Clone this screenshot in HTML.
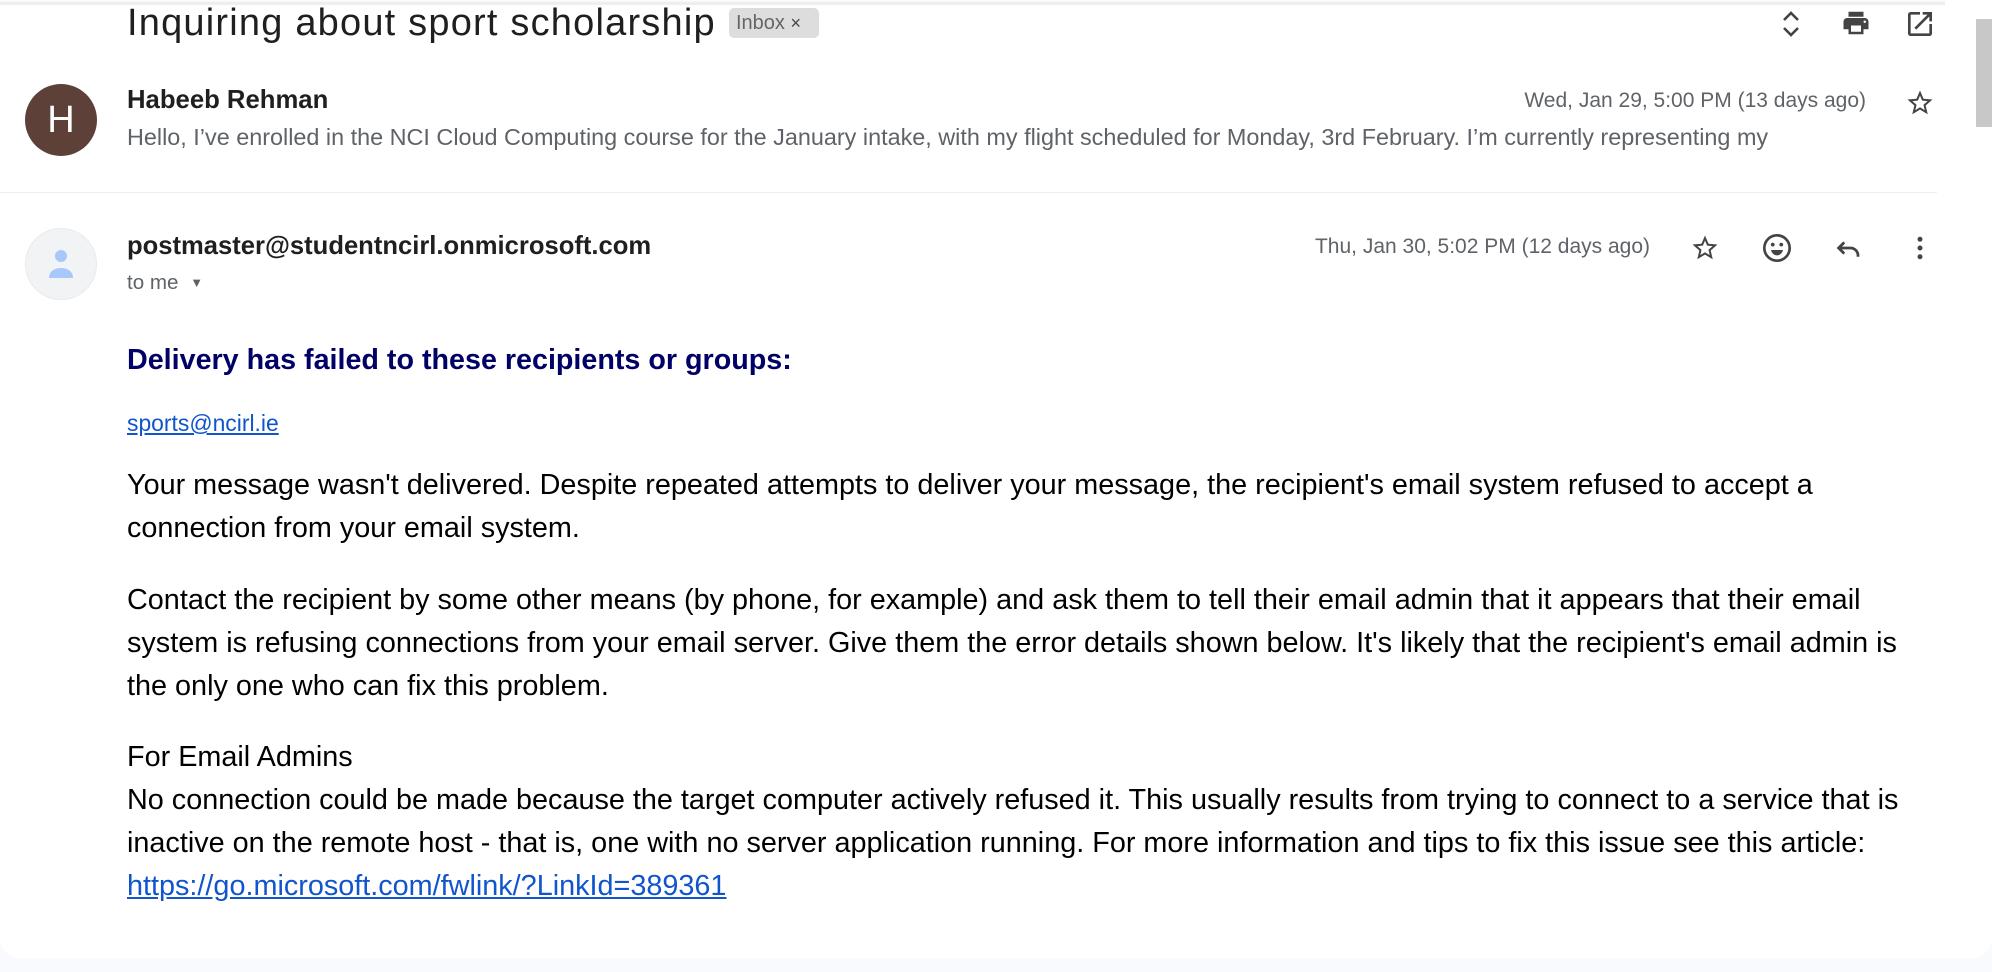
<!DOCTYPE html>
<html><head><meta charset="utf-8"><style>
*{margin:0;padding:0;box-sizing:border-box}
body{width:1992px;height:972px;background:#f8fafd;font-family:"Liberation Sans",Arial,sans-serif;position:relative;overflow:hidden}
.card{position:absolute;left:0;top:0;width:1992px;height:958px;background:#fff;border-radius:0 0 20px 20px}
.a{position:absolute;white-space:nowrap}
.shadow{position:absolute;left:0;top:0;width:1945px;height:6px;background:linear-gradient(#fff,#e8eaed 60%,#fff)}
.body{color:#000;font-size:28.8px;line-height:43px;left:127px}
svg{position:absolute}
</style></head><body>
<div class="card"></div>
<div class="shadow"></div>
<div class="a" style="left:127px;top:2px;font-size:38px;color:#1f1f1f;letter-spacing:1.2px">Inquiring about sport scholarship</div>
<div class="a" style="left:729px;top:8px;width:90px;height:30px;background:#ddd;border-radius:5px;font-size:20px;color:#666;line-height:30px;padding-left:7px">Inbox <span style="font-size:18px;color:#444">×</span></div>
<svg style="left:1776px;top:8px" width="30" height="32" viewBox="0 0 30 32"><path d="M8 12l7-7 7 7M8 20l7 7 7-7" fill="none" stroke="#444" stroke-width="2.6"/></svg>
<svg style="left:1840px;top:8px" width="32" height="30" viewBox="0 0 24 24"><path d="M19 8H5c-1.66 0-3 1.34-3 3v6h4v4h12v-4h4v-6c0-1.66-1.34-3-3-3zm-3 11H8v-5h8v5zm3-7c-.55 0-1-.45-1-1s.45-1 1-1 1 .45 1 1-.45 1-1 1zm-1-9H6v4h12V3z" fill="#444"/></svg>
<svg style="left:1904px;top:8px" width="32" height="32" viewBox="0 0 24 24"><path d="M19 19H5V5h7V3H5a2 2 0 0 0-2 2v14a2 2 0 0 0 2 2h14c1.1 0 2-.9 2-2v-7h-2v7zM14 3v2h3.59l-9.83 9.83 1.41 1.41L19 6.41V10h2V3h-7z" fill="#444"/></svg>
<div class="a" style="left:1976px;top:19px;width:16px;height:108px;background:#c8c8c8"></div>

<div class="a" style="left:25px;top:84px;width:72px;height:72px;border-radius:50%;background:#5d4037;color:#fff;font-size:38px;line-height:72px;text-align:center">H</div>
<div class="a" style="left:127px;top:86px;font-size:25.7px;font-weight:bold;color:#1f1f1f">Habeeb Rehman</div>
<div class="a" style="left:127px;top:124px;font-size:23.4px;color:#5f6368">Hello, I’ve enrolled in the NCI Cloud Computing course for the January intake, with my flight scheduled for Monday, 3rd February. I’m currently representing my</div>
<div class="a" style="right:126px;top:89px;font-size:21px;color:#5f6368">Wed, Jan 29, 5:00 PM (13 days ago)</div>
<svg style="left:1905px;top:88px" width="30" height="30" viewBox="0 0 24 24"><path d="M22 9.24l-7.19-.62L12 2 9.19 8.63 2 9.24l5.46 4.73L5.82 21 12 17.27 18.18 21l-1.63-7.03L22 9.24zM12 15.4l-3.76 2.27 1-4.28-3.32-2.88 4.38-.38L12 6.1l1.71 4.04 4.38.38-3.32 2.88 1 4.28L12 15.4z" fill="#444"/></svg>
<div class="a" style="left:0;top:192px;width:1937px;height:1px;background:#eceff1"></div>

<div class="a" style="left:25px;top:228px;width:72px;height:72px;border-radius:50%;background:#f1f3f4;border:1px solid #e8eaed"></div>
<svg style="left:46px;top:246px" width="30" height="36" viewBox="0 0 30 36"><circle cx="15" cy="10" r="6" fill="#a8c7fa"/><path d="M3 32c0-7 6-10 12-10s12 3 12 10z" fill="#a8c7fa"/></svg>
<div class="a" style="left:127px;top:232px;font-size:25.6px;font-weight:bold;color:#1f1f1f">postmaster@studentncirl.onmicrosoft.com</div>
<div class="a" style="left:127px;top:271px;font-size:20.6px;color:#5f6368">to me <span style="font-size:13px;position:relative;top:-2px;margin-left:6px">▼</span></div>
<div class="a" style="right:342px;top:235px;font-size:21px;color:#5f6368">Thu, Jan 30, 5:02 PM (12 days ago)</div>
<svg style="left:1690px;top:233px" width="30" height="30" viewBox="0 0 24 24"><path d="M22 9.24l-7.19-.62L12 2 9.19 8.63 2 9.24l5.46 4.73L5.82 21 12 17.27 18.18 21l-1.63-7.03L22 9.24zM12 15.4l-3.76 2.27 1-4.28-3.32-2.88 4.38-.38L12 6.1l1.71 4.04 4.38.38-3.32 2.88 1 4.28L12 15.4z" fill="#444"/></svg>
<svg style="left:1761px;top:232px" width="32" height="32" viewBox="0 0 24 24"><circle cx="12" cy="12" r="9.5" fill="none" stroke="#444" stroke-width="2"/><circle cx="8.8" cy="9.5" r="1.4" fill="#444"/><circle cx="15.2" cy="9.5" r="1.4" fill="#444"/><path d="M7.5 13.5h9c-.6 2.5-2.4 4-4.5 4s-3.9-1.5-4.5-4z" fill="#444"/></svg>
<svg style="left:1833px;top:233px" width="30" height="30" viewBox="0 0 24 24"><path d="M9 7.5L4.5 12 9 16.5M5 12h9a6 6 0 0 1 6 6v1" fill="none" stroke="#444" stroke-width="2.2"/></svg>
<svg style="left:1905px;top:233px" width="30" height="30" viewBox="0 0 24 24"><circle cx="12" cy="5" r="2" fill="#444"/><circle cx="12" cy="12" r="2" fill="#444"/><circle cx="12" cy="19" r="2" fill="#444"/></svg>

<div class="a" style="left:127px;top:344px;font-size:28.7px;font-weight:bold;color:#000066">Delivery has failed to these recipients or groups:</div>
<div class="a" style="left:127px;top:410px;font-size:22.9px;color:#1155cc;text-decoration:underline">sports@ncirl.ie</div>
<div class="a body" style="top:464px">Your message wasn't delivered. Despite repeated attempts to deliver your message, the recipient's email system refused to accept a<br>connection from your email system.</div>
<div class="a body" style="top:579px">Contact the recipient by some other means (by phone, for example) and ask them to tell their email admin that it appears that their email<br>system is refusing connections from your email server. Give them the error details shown below. It's likely that the recipient's email admin is<br>the only one who can fix this problem.</div>
<div class="a body" style="top:736px">For Email Admins<br>No connection could be made because the target computer actively refused it. This usually results from trying to connect to a service that is<br>inactive on the remote host - that is, one with no server application running. For more information and tips to fix this issue see this article:<br><span style="color:#1155cc;text-decoration:underline">https://go.microsoft.com/fwlink/?LinkId=389361</span></div>
</body></html>
